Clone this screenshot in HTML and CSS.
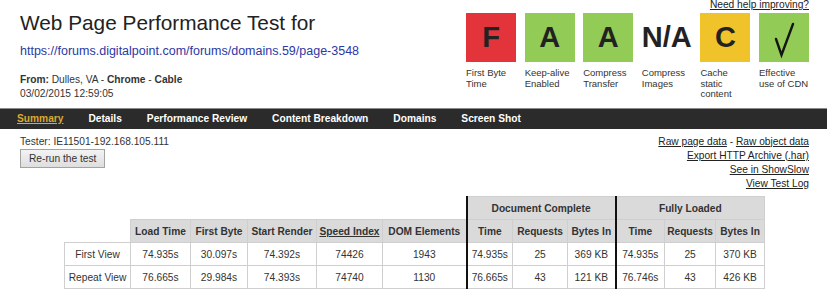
FILE: index.html
```html
<!DOCTYPE html>
<html>
<head>
<meta charset="utf-8">
<title>Web Page Performance Test</title>
<link rel="stylesheet" href="styles.css">
</head>
<body>
<header class="top">
  <div class="info">
    <h1 class="title">Web Page Performance Test for</h1>
    <a class="url" href="#">https://forums.digitalpoint.com/forums/domains.59/page-3548</a>
    <div class="from"><b>From:</b> Dulles, VA - <b>Chrome</b> - <b>Cable</b></div>
    <div class="date">03/02/2015 12:59:05</div>
  </div>
  <div class="grades">
    <a class="help" href="#">Need help improving?</a>
    <ul class="grade-list">
      <li class="grade"><div class="box red">F</div><div class="lbl">First Byte Time</div></li>
      <li class="grade"><div class="box green">A</div><div class="lbl">Keep-alive Enabled</div></li>
      <li class="grade"><div class="box green">A</div><div class="lbl">Compress Transfer</div></li>
      <li class="grade"><div class="box na">N/A</div><div class="lbl">Compress Images</div></li>
      <li class="grade"><div class="box yellow">C</div><div class="lbl">Cache static content</div></li>
      <li class="grade"><div class="box green"><svg class="check" width="50" height="49" viewBox="0 0 50 49"><polyline points="17,26 22.5,42 34,11" fill="none" stroke="#151515" stroke-width="2.4" stroke-linejoin="miter" stroke-linecap="round"/></svg></div><div class="lbl">Effective use of CDN</div></li>
    </ul>
  </div>
</header>
<nav class="tabs">
  <a class="tab active" href="#">Summary</a>
  <a class="tab" href="#">Details</a>
  <a class="tab" href="#">Performance Review</a>
  <a class="tab" href="#">Content Breakdown</a>
  <a class="tab" href="#">Domains</a>
  <a class="tab" href="#">Screen Shot</a>
</nav>
<section class="tools">
  <div class="tester">
    <div class="tester-line">Tester: IE11501-192.168.105.111</div>
    <button class="rerun" type="button">Re-run the test</button>
  </div>
  <div class="links">
    <div><a href="#">Raw page data</a> - <a href="#">Raw object data</a></div>
    <div><a href="#">Export HTTP Archive (.har)</a></div>
    <div><a href="#">See in ShowSlow</a></div>
    <div><a href="#">View Test Log</a></div>
  </div>
</section>
<table class="results">
  <colgroup>
    <col class="w66"><col class="w60"><col class="w57"><col class="w69"><col class="w66"><col class="w84">
    <col class="w46"><col class="w55"><col class="w48"><col class="w49"><col class="w51"><col class="w49">
  </colgroup>
  <thead>
    <tr>
      <th class="blank" rowspan="2"></th>
      <th class="blank" colspan="5"></th>
      <th class="sep" colspan="3">Document Complete</th>
      <th class="sep" colspan="3">Fully Loaded</th>
    </tr>
    <tr>
      <th>Load Time</th>
      <th>First Byte</th>
      <th>Start Render</th>
      <th><span class="u">Speed Index</span></th>
      <th>DOM Elements</th>
      <th class="sep">Time</th>
      <th>Requests</th>
      <th>Bytes In</th>
      <th class="sep">Time</th>
      <th>Requests</th>
      <th>Bytes In</th>
    </tr>
  </thead>
  <tbody>
    <tr>
      <td>First View</td>
      <td>74.935s</td>
      <td>30.097s</td>
      <td>74.392s</td>
      <td>74426</td>
      <td>1943</td>
      <td class="sep">74.935s</td>
      <td>25</td>
      <td>369 KB</td>
      <td class="sep">74.935s</td>
      <td>25</td>
      <td>370 KB</td>
    </tr>
    <tr>
      <td>Repeat View</td>
      <td>76.665s</td>
      <td>29.984s</td>
      <td>74.393s</td>
      <td>74740</td>
      <td>1130</td>
      <td class="sep">76.665s</td>
      <td>43</td>
      <td>121 KB</td>
      <td class="sep">76.746s</td>
      <td>43</td>
      <td>426 KB</td>
    </tr>
  </tbody>
</table>
</body>
</html>
```

FILE: styles.css
```css
* { box-sizing: border-box; }

body {
  margin: 0;
  font-family: "Liberation Sans", Arial, sans-serif;
  font-size: 10.2px;
  color: #333;
  background: #fff;
}

/* ---------- header ---------- */
.top {
  display: flex;
  justify-content: space-between;
  height: 108px;
  padding: 0 18px 0 20px;
}

.title {
  margin: 11px 0 0;
  font-size: 20.8px;
  font-weight: normal;
  line-height: 24px;
  color: #222;
}

.url {
  display: block;
  margin-top: 9px;
  font-size: 12.5px;
  line-height: 15px;
  color: #2b38a6;
  text-decoration: none;
}

.from {
  margin-top: 13.6px;
  line-height: 14px;
}

.date {
  line-height: 14px;
}

.grades {
  display: flex;
  flex-direction: column;
  align-items: flex-end;
}

.help {
  line-height: 10px;
  color: #222;
  text-decoration: underline;
}

.grade-list {
  display: flex;
  gap: 8.6px;
  list-style: none;
  margin: 3px 0 0;
  padding: 0;
}

.grade {
  width: 50px;
}

.box {
  display: flex;
  align-items: center;
  justify-content: center;
  width: 50px;
  height: 49px;
  font-size: 29px;
  font-weight: bold;
  line-height: 1;
  color: #222;
}

.red { background: #e2343a; }
.green { background: #92cb55; }
.yellow { background: #f1c32a; }
.na { background: #fff; }

.check { display: block; }

.lbl {
  width: 51px;
  margin-top: 6px;
  font-size: 9.5px;
  line-height: 10.5px;
  color: #333;
}

/* ---------- tabs ---------- */
.tabs {
  display: flex;
  gap: 25px;
  height: 21px;
  padding-left: 17px;
  background: #2b2b2b;
  border-top: 1px solid #8a8a8a;
}

.tab {
  font-weight: bold;
  line-height: 20px;
  color: #fff;
  text-decoration: none;
}

.tab.active {
  color: #dba92e;
  text-decoration: underline;
}

/* ---------- tools ---------- */
.tools {
  display: flex;
  justify-content: space-between;
  padding: 5.5px 18px 0 20px;
}

.tester-line,
.links {
  line-height: 14px;
}

.links {
  text-align: right;
}

.links a {
  color: #222;
  text-decoration: underline;
}

.rerun {
  display: block;
  height: 19px;
  padding: 0 8px;
  font-family: "Liberation Sans", Arial, sans-serif;
  font-size: 10.2px;
  color: #333;
  background: linear-gradient(#f3f3f3, #dedede);
  border: 1px solid #a3a3a3;
  border-radius: 0;
}

/* ---------- results table ---------- */
.results {
  margin: 5.5px 0 0 64px;
  border-collapse: collapse;
  table-layout: fixed;
  width: 701px;
}

.w46 { width: 46px; }
.w48 { width: 48px; }
.w49 { width: 49px; }
.w51 { width: 51px; }
.w55 { width: 55px; }
.w57 { width: 57px; }
.w60 { width: 60px; }
.w66 { width: 66px; }
.w69 { width: 69px; }
.w84 { width: 84px; }

.results tr {
  height: 23px;
}

.results th,
.results td {
  padding: 0;
  text-align: center;
  white-space: nowrap;
  border: 1px solid #cfcfcf;
  color: #333;
}

.results th {
  font-weight: bold;
  background: #dadada;
}

.results td {
  background: #fff;
}

.results th.blank {
  border: none;
  background: #fff;
}

.results .sep {
  border-left: 2px solid #111;
}

.u {
  text-decoration: underline;
}
```
